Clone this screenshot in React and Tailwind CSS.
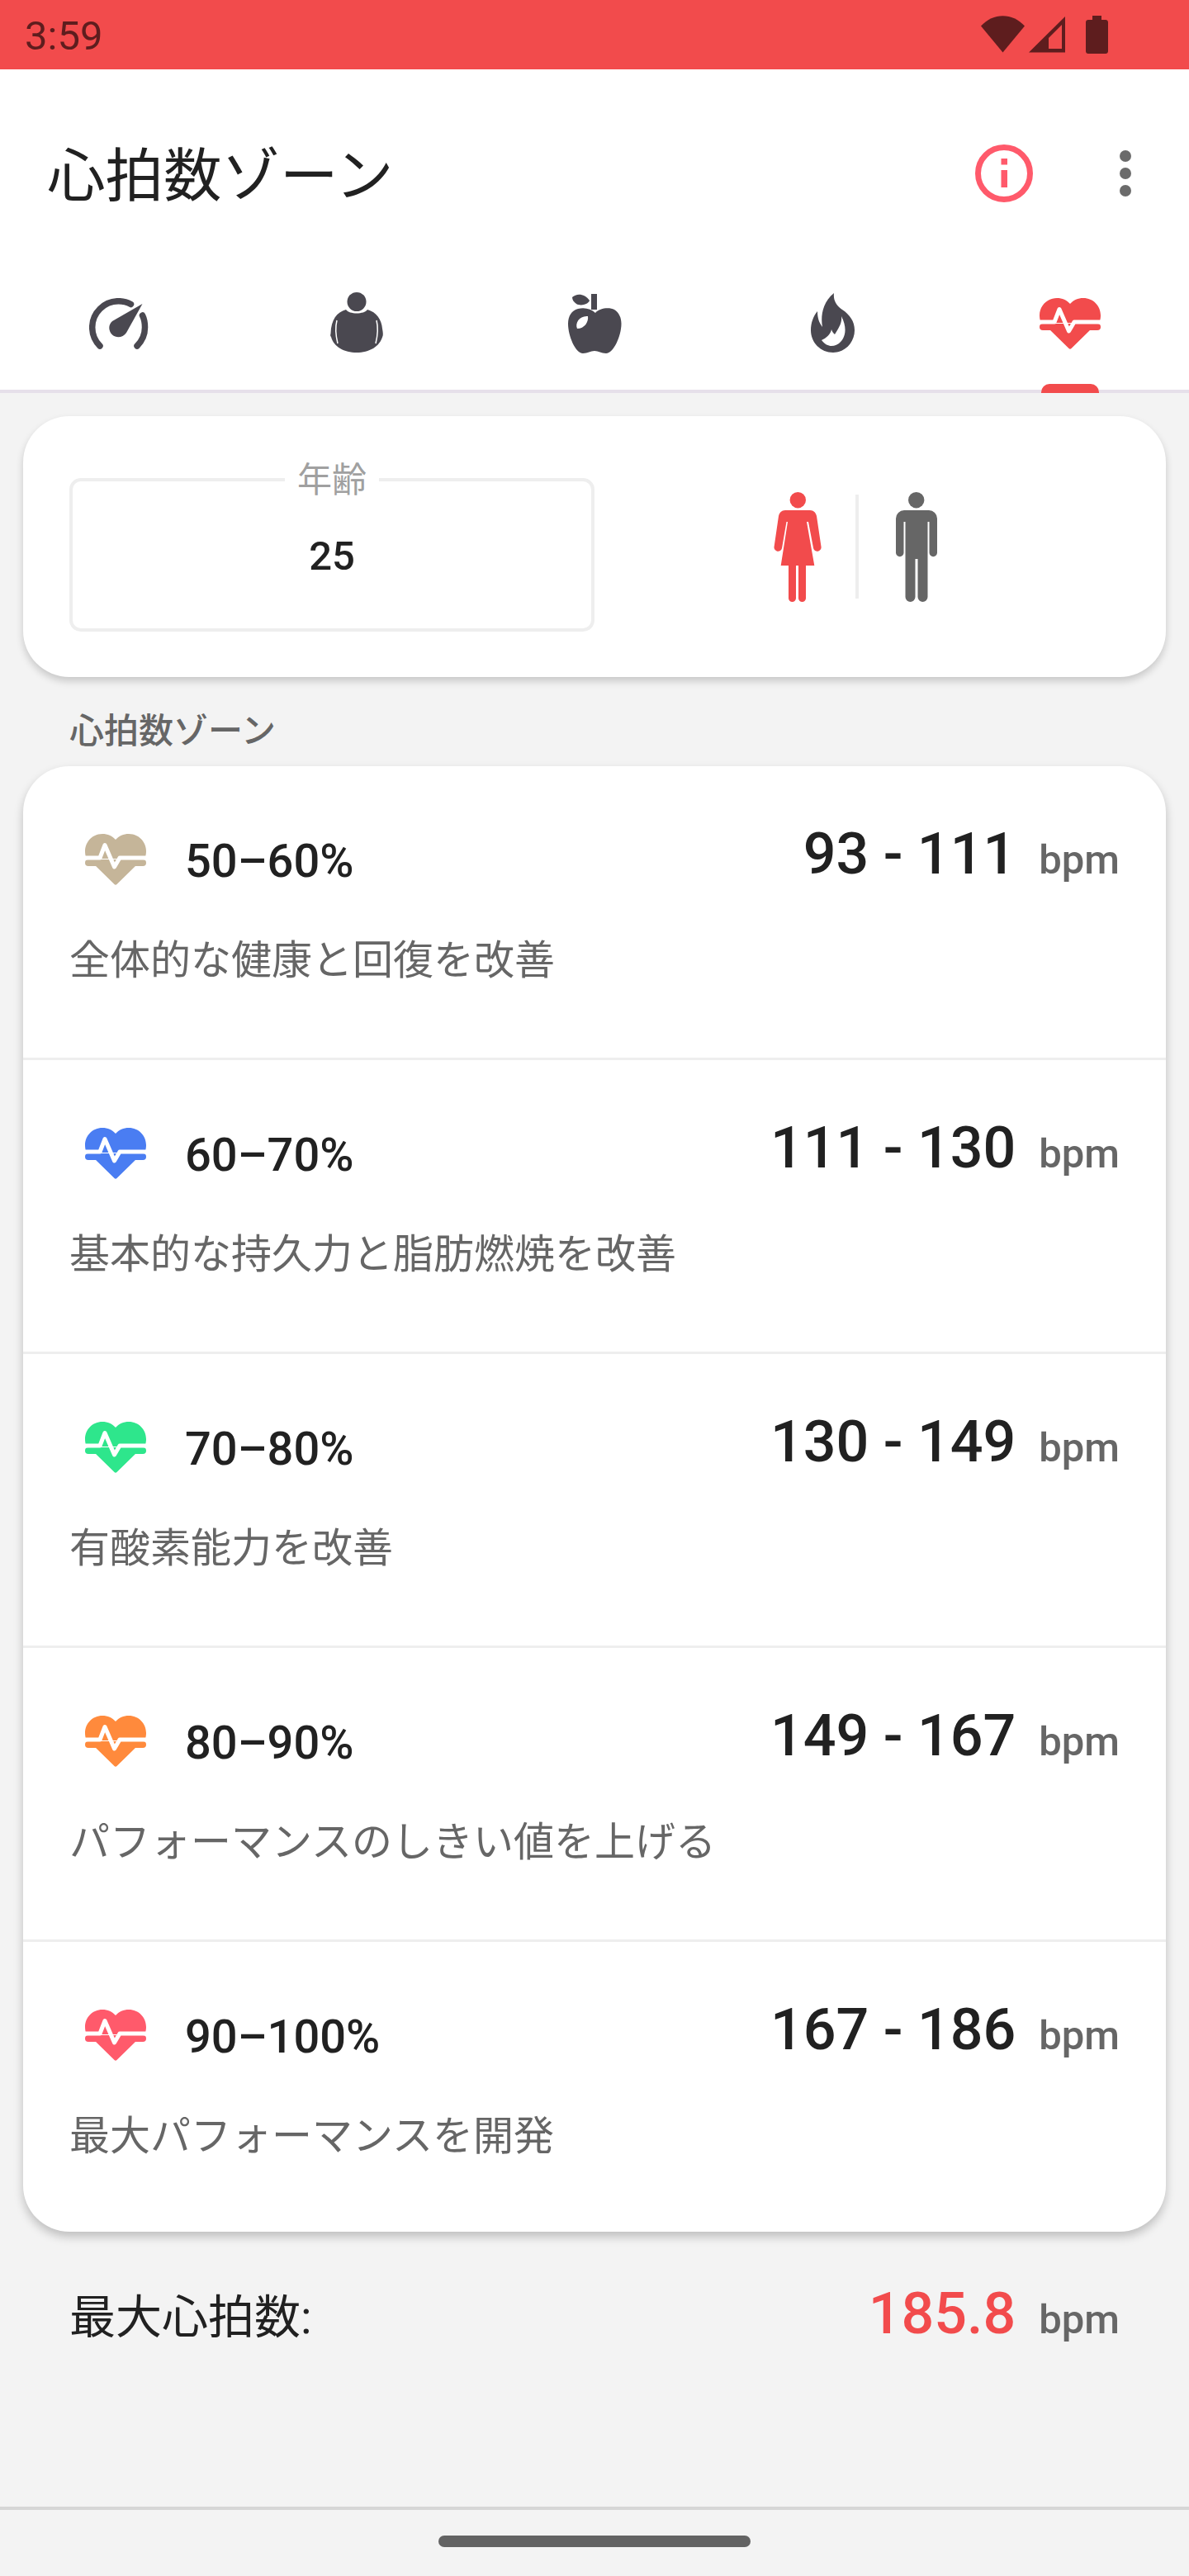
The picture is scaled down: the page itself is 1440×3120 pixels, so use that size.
import React from "react";

function Pulse({ color }) {
  return (
    <svg width="74" height="62" viewBox="0 0 74 62" className="shrink-0">
      <path fill={color} d="M37 7C33 2.500 27.500 0 21 0C9 0 0 9.500 0 21C0 24 .6 27 1.500 30H72.500C73.400 27 74 24 74 21C74 9.500 65 0 53 0C46.500 0 41 2.500 37 7Z" />
      <rect x="0" y="31" width="74" height="8" rx="4" fill={color} />
      <path fill={color} d="M11 37H63L38.500 61C37.700 62 36.300 62 35.500 61Z" />
      <path fill="none" stroke="#fff" strokeWidth="5" strokeLinejoin="round" strokeLinecap="round" d="M-3 29H18L24 13.500L35.500 40L42 29H77" />
    </svg>
  );
}

const Zones = [
  { pct: "50–60%", range: "93 - 111", desc: "全体的な健康と回復を改善", color: "#c5b599" },
  { pct: "60–70%", range: "111 - 130", desc: "基本的な持久力と脂肪燃焼を改善", color: "#4a7df2" },
  { pct: "70–80%", range: "130 - 149", desc: "有酸素能力を改善", color: "#2ee68c" },
  { pct: "80–90%", range: "149 - 167", desc: "パフォーマンスのしきい値を上げる", color: "#ff8a3c" },
  { pct: "90–100%", range: "167 - 186", desc: "最大パフォーマンスを開発", color: "#ff5a6b" },
];

function StatusIcons() {
  return (
    <svg width="154" height="46" viewBox="1188 19 154 46" className="mr-[98px]">
      <path fill="#5e1d1e" d="M1188 31.500C1203 15 1226 15 1241 31.500L1214.500 63.500Z" />
      <path fill="#5e1d1e" fillRule="evenodd" d="M1246 63.500L1290 20V63.500ZM1270 46V59H1286V30Z" />
      <path fill="#5e1d1e" d="M1323 19H1334V24H1339C1340.700 24 1342 25.300 1342 27V62C1342 63.700 1340.700 65 1339 65H1318C1316.300 65 1315 63.700 1315 62V27C1315 25.300 1316.300 24 1318 24H1323Z" />
    </svg>
  );
}

function Gauge() {
  return (
    <svg width="72" height="62" viewBox="0 0 72 62">
      <path fill="none" stroke="#4a4850" strokeWidth="7.500" strokeLinecap="round" d="M13 58C7 52 3.700 44 3.700 35.500C3.700 18 18 3.700 35.500 3.700C41 3.700 46 5 50.500 7.500" />
      <path fill="none" stroke="#4a4850" strokeWidth="7.500" strokeLinecap="round" d="M64.500 21C66.500 25 67.500 30 67.500 35.500C67.500 44 64 52 58 58" />
      <path fill="#4a4850" d="M64.500 7L45 42C41 48 33 49 28 44.500C23 40 23 32 28 28Z" />
    </svg>
  );
}

function Person() {
  return (
    <svg width="64" height="73" viewBox="0 0 64 73">
      <circle cx="32" cy="11.500" r="11.500" fill="#4a4850" />
      <path fill="#4a4850" d="M19 21C23 27 41 27 45 21C56 24 62 33 63 44C64 49 64 52 63.500 53C60 66 47 73 32 73C17 73 4 66 1 54C0 53 0 52 .5 50C1 33 8 24 19 21Z" />
      <path fill="none" stroke="#fff" strokeWidth="1.500" d="M8 34C6 42 7 54 9 62M56 34C58 42 57 54 55 62" />
    </svg>
  );
}

function Apple() {
  return (
    <svg width="65" height="73" viewBox="0 0 65 73">
      <path fill="#4a4850" d="M28 1H35V20H28Z" />
      <path fill="#4a4850" d="M5 5C10 0 20 0 26 9C24 14 15 16 10 13C7 11 5 8 5 5Z" />
      <path fill="#4a4850" fillRule="evenodd" d="M33 24C38 18 50 17 56 20C62 24 64.500 30 64.500 37C64.500 52 55 73 46 73C40 73 37 70 32 70C27 70 24 73 18 73C9 73 0 52 0 37C0 28 4 21 12 19C20 17 28 19 33 24ZM11 43C8 36 14 27 24 28C25 35 20 43 11 43Z" />
    </svg>
  );
}

function Flame() {
  return (
    <svg width="53" height="72" viewBox="0 0 53 72">
      <path fill="#4a4850" fillRule="evenodd" d="M28 0C27 9 31 15 38 20C47 26 53 34 53 45C53 60 41 72 27 72C12 72 0 60 0 45C0 36 3 28 8 22C8 30 10 36 14 41C12 30 13 12 28 0ZM37 28C38 36 34 42 29 50C27 48 26 47 25 44C24 50 18 55 13 57C17 62 21 64 25 64C37 64 48 49 37 28Z" />
    </svg>
  );
}

function Woman() {
  return (
    <svg width="58" height="133" viewBox="0 0 58 133">
      <circle cx="29.300" cy="9.700" r="9.700" fill="#f24b4c" />
      <path fill="#f24b4c" d="M14 22H44C48.500 22 51 25 52 29L57.500 66A4.800 4.800 0 0 1 48.100 68L42 36H40L49.300 89H39V128.500A4.500 4.500 0 0 1 30 128.500V89H27V128.500A4.500 4.500 0 0 1 18 128.500V89H8.700L17 36H15.500L10 68A4.800 4.800 0 0 1 .6 66L6 29C7 25 9.500 22 14 22Z" />
    </svg>
  );
}

function Man() {
  return (
    <svg width="50" height="133" viewBox="0 0 50 133">
      <circle cx="24.700" cy="9.700" r="9.700" fill="#666666" />
      <path fill="#666666" d="M10 22H40A10 10 0 0 1 50 32V73.500A4.750 4.750 0 0 1 40.500 73.500V36H38.500V127A6 6 0 0 1 26.500 127V81H23.500V127A6 6 0 0 1 11.500 127V36H9.500V73.500A4.750 4.750 0 0 1 0 73.500V32A10 10 0 0 1 10 22Z" />
    </svg>
  );
}

export default function App() {
  return (
    <div className="flex h-[3120px] w-[1440px] flex-col overflow-hidden bg-[#f3f3f3] font-[Roboto,'Noto_Sans_CJK_JP',sans-serif] text-[#212121]">
      <header className="bg-white">
        <div className="flex h-[84px] items-center justify-between bg-[#f24b4c]">
          <span className="pl-[30px] pt-[2px] text-[49px] font-normal leading-none text-[#5e1d1e]">3:59</span>
          <StatusIcons />
        </div>
        <div className="flex h-[252px] items-center justify-between pl-[57px]">
          <h1 className="pt-[8px] text-[70.500px] font-normal leading-none">心拍数ゾーン</h1>
          <div className="flex items-center">
            <svg width="70" height="70" viewBox="0 0 70 70">
              <circle cx="35" cy="35" r="31.500" fill="none" stroke="#ff5a6b" strokeWidth="7" />
              <rect x="31.500" y="17" width="7.500" height="7.500" fill="#ff5a6b" />
              <rect x="31.500" y="31" width="7.500" height="21" fill="#ff5a6b" />
            </svg>
            <div className="ml-[105px] mr-[70px] flex flex-col gap-[7px]">
              <span className="h-[14px] w-[14px] rounded-full bg-[#6b6b6b]" />
              <span className="h-[14px] w-[14px] rounded-full bg-[#6b6b6b]" />
              <span className="h-[14px] w-[14px] rounded-full bg-[#6b6b6b]" />
            </div>
          </div>
        </div>
        <div className="grid h-[140px] grid-cols-5 border-b-4 border-[#e6e0ea]">
          <div className="flex justify-center pt-[25px]"><Gauge /></div>
          <div className="flex justify-center pt-[18px]"><Person /></div>
          <div className="flex justify-center pt-[19px]"><Apple /></div>
          <div className="flex justify-center pt-[19px]"><Flame /></div>
          <div className="relative flex justify-center pt-[25px]">
            <div><Pulse color="#f24b4c" /></div>
            <span className="absolute bottom-[-4px] left-1/2 h-[11px] w-[70px] -translate-x-1/2 rounded-t-[10px] bg-[#f24b4c]" />
          </div>
        </div>
      </header>

      <main className="px-[28px]">
        <section className="mt-[28px] flex h-[316px] items-center rounded-[56px] bg-white shadow-[0_5px_10px_rgba(0,0,0,0.18)]">
          <div className="relative ml-[56px] mt-[19px] flex h-[186px] w-[636px] items-center justify-center rounded-[14px] border-4 border-[#eeeeee]">
            <span className="absolute left-1/2 top-[-24px] -translate-x-1/2 bg-white px-[15px] text-[42px] leading-[46px] text-[#a0a0a0]">年齢</span>
            <span className="pt-[3px] text-[49px] font-medium leading-none">25</span>
          </div>
          <div className="ml-[217px] flex items-center">
            <Woman />
            <span className="ml-[41px] mr-[45px] h-[126px] w-[4px] bg-[#eeeeee]" />
            <Man />
          </div>
        </section>

        <h2 className="ml-[56px] mt-[41px] h-[50px] text-[42px] font-medium leading-[50px] text-[#666666]">心拍数ゾーン</h2>

        <section className="mt-[17px] rounded-[56px] bg-white shadow-[0_6px_12px_rgba(0,0,0,0.22)]">
          {Zones.map((z, i) => (
            <div key={z.pct} className={i < 4 ? "h-[356px] border-b-[3px] border-[#eeeeee] px-[56px] pt-[82px]" : "h-[351px] px-[56px] pt-[82px]"}>
              <div className="flex h-[62px] items-center justify-between">
                <div className="flex items-center pl-[19px]">
                  <Pulse color={z.color} />
                  <span className="ml-[47px] pt-[3px] text-[56px] font-medium leading-none">{z.pct}</span>
                </div>
                <div className="mb-[14px] flex items-baseline">
                  <span className="text-[70px] font-medium leading-none">{z.range}</span>
                  <span className="ml-[28px] text-[49px] font-medium leading-none text-[#666666]">bpm</span>
                </div>
              </div>
              <p className="mt-[62px] text-[49px] leading-[60px] text-[#666666]">{z.desc}</p>
            </div>
          ))}
        </section>

        <div className="mt-[64px] flex items-baseline justify-between px-[56px]">
          <span className="text-[56px] leading-none">最大心拍数:</span>
          <div className="flex items-baseline">
            <span className="text-[70px] font-medium leading-none text-[#f24b4c]">185.8</span>
            <span className="ml-[28px] text-[49px] font-medium leading-none text-[#666666]">bpm</span>
          </div>
        </div>
      </main>

      <footer className="mt-auto flex h-[84px] justify-center border-t-4 border-[#d6d6d6] pt-[31px]">
        <span className="h-[14px] w-[378px] rounded-[7px] bg-[#636363]" />
      </footer>
    </div>
  );
}
